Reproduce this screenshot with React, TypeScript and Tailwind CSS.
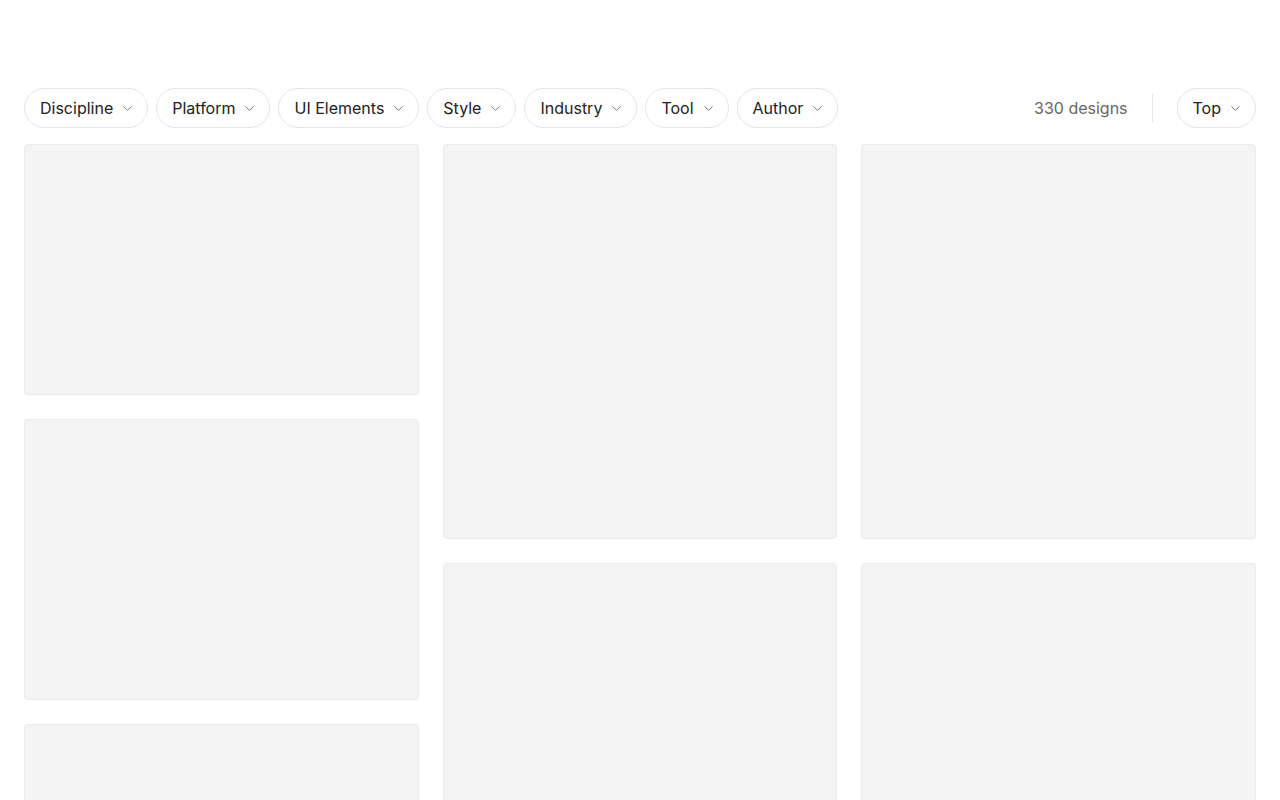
import { ChevronDown } from 'lucide-react'

const filters = ['Discipline', 'Platform', 'UI Elements', 'Style', 'Industry', 'Tool', 'Author']

// each column holds placeholder shots of varying height
const columns: number[][] = [
  [251, 281, 281],
  [395, 395],
  [395, 395],
]

function FilterPill({ label }: { label: string }) {
  return (
    <button
      type="button"
      className="flex h-10 items-center gap-[7px] rounded-full border border-[#e6e6e6] bg-white pl-[15px] pr-[12px] text-[16px] text-[#222]"
    >
      <span>{label}</span>
      <ChevronDown size={15} strokeWidth={1.6} className="text-[#7a7a7a]" />
    </button>
  )
}

export default function App() {
  return (
    <div className="min-h-screen bg-white font-['Inter',sans-serif]">
      <div className="h-[88px]" />
      <div className="flex items-center justify-between px-6">
        <div className="flex gap-2">
          {filters.map((f) => (
            <FilterPill key={f} label={f} />
          ))}
        </div>
        <div className="flex items-center">
          <span className="text-[16px] text-[#666]">330 designs</span>
          <div className="mx-6 h-7 w-px bg-[#e6e6e6]" />
          <FilterPill label="Top" />
        </div>
      </div>
      <div className="mt-4 grid grid-cols-3 gap-6 px-6">
        {columns.map((col, i) => (
          <div key={i} className="flex flex-col gap-6">
            {col.map((h, j) => (
              <div
                key={j}
                className="rounded-[4px] border border-[#ebebeb] bg-[#f4f4f4]"
                style={{ height: h }}
              />
            ))}
          </div>
        ))}
      </div>
    </div>
  )
}
